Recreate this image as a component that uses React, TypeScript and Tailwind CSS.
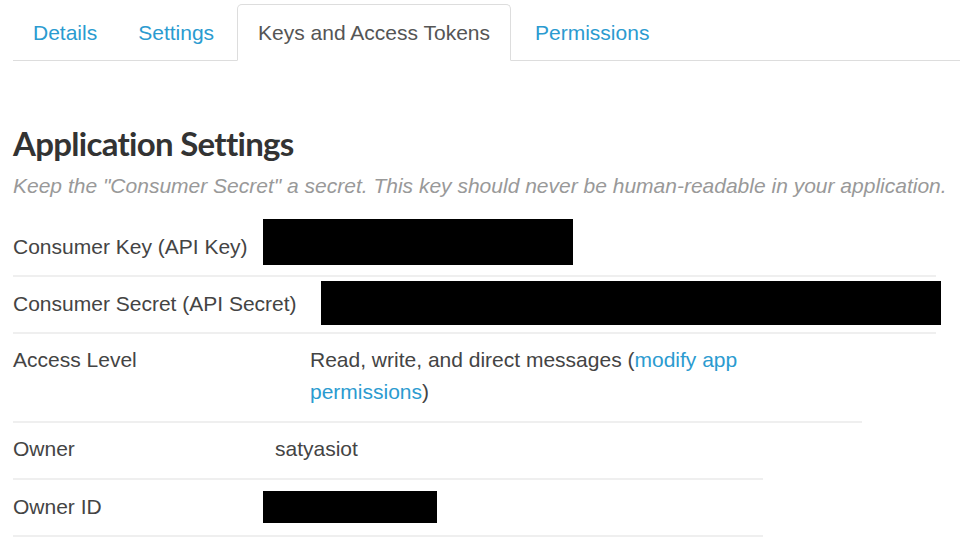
const tabs = [
  { label: "Details", gap: "mr-[1px]" },
  { label: "Settings", gap: "mr-[3px]" },
  { label: "Keys and Access Tokens", gap: "mr-[4px]", active: true },
  { label: "Permissions", gap: "" },
];

function Redacted({ w, h }: { w: string; h: string }) {
  return <div className={`${w} ${h} bg-black shrink-0`} />;
}

export default function App() {
  return (
    <div className="min-h-screen bg-white pl-[13px] text-[21px] text-[#444] font-['Liberation_Sans',Arial,sans-serif]">
      {/* TABS */}
      <ul className="flex pt-[4px] border-b border-[#dddddd]">
        {tabs.map((t) => (
          <li key={t.label} className={`-mb-px ${t.gap}`}>
            <a
              className={`block h-[57px] leading-[56px] rounded-t-[5px] border ${
                t.active
                  ? "px-[20px] border-[#dddddd] border-b-white bg-white text-[#555]"
                  : "px-[19px] border-transparent text-[#2b9bd0]"
              }`}
            >
              {t.label}
            </a>
          </li>
        ))}
      </ul>

      {/* HEADING */}
      <h2 className="mt-[62px] text-[33px] leading-[40px] font-bold tracking-[-0.7px] text-[#333] font-['Lato',sans-serif]">
        Application Settings
      </h2>
      <p className="mt-[9px] leading-[28px] italic text-[#999]">
        Keep the "Consumer Secret" a secret. This key should never be human-readable in your application.
      </p>

      {/* ROWS */}
      <div className="mt-[19px] flex flex-col">
        <div className="w-[923px] flex items-center border-b-2 border-[#efefef] pb-[10px]">
          <div className="w-[250px] pt-[10px]">Consumer Key (API Key)</div>
          <Redacted w="w-[310px]" h="h-[46px]" />
        </div>
        <div className="w-[923px] flex items-center border-b-2 border-[#efefef] pt-[4px] pb-[7px]">
          <div className="w-[308px] pt-[2px] shrink-0">Consumer Secret (API Secret)</div>
          <Redacted w="w-[620px]" h="h-[44px]" />
        </div>
        <div className="w-[849px] flex items-start border-b-2 border-[#efefef] pt-[10px] pb-[13px] leading-[32px]">
          <div className="w-[297px] shrink-0">Access Level</div>
          <div className="w-[460px]">
            Read, write, and direct messages (<a className="text-[#2b9bd0]">modify app permissions</a>)
          </div>
        </div>
        <div className="w-[750px] flex items-center border-b-2 border-[#efefef] pt-[10px] pb-[13px] leading-[32px]">
          <div className="w-[262px]">Owner</div>
          <div>satyasiot</div>
        </div>
        <div className="w-[750px] flex items-center border-b-2 border-[#efefef] pt-[11px] pb-[12px] leading-[32px]">
          <div className="w-[250px]">Owner ID</div>
          <Redacted w="w-[174px]" h="h-[32px]" />
        </div>
      </div>
    </div>
  );
}
